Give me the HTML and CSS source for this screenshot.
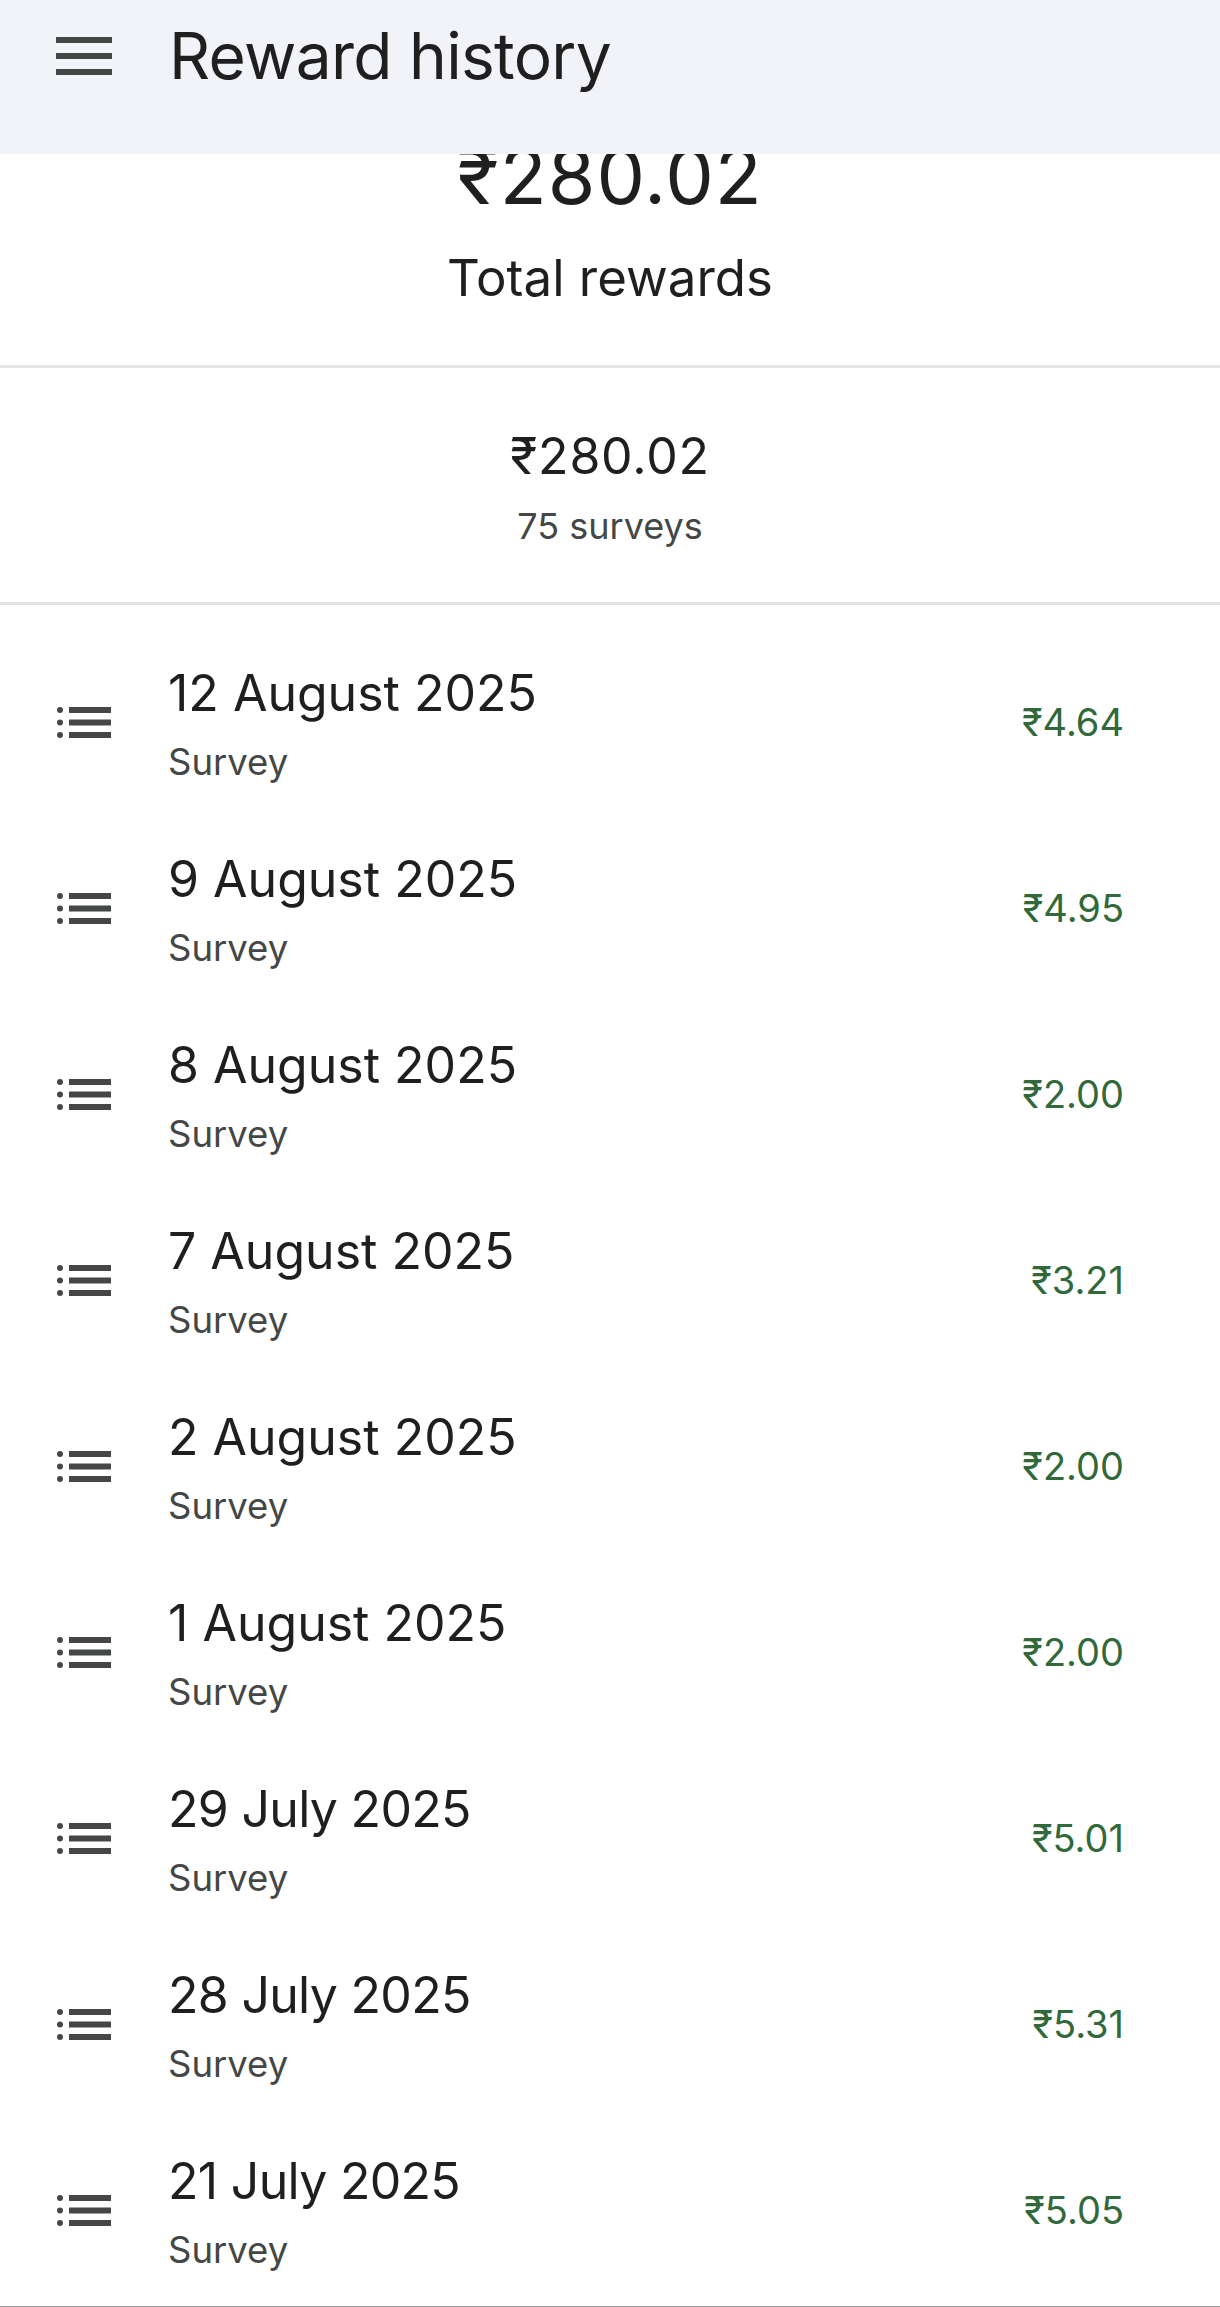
FILE: index.html
```html
<!DOCTYPE html>
<html lang="en">
<head>
<meta charset="utf-8">
<title>Reward history</title>
<link rel="stylesheet" href="styles.css">
</head>
<body>
<header class="bar">
  <svg class="menu" viewBox="0 0 56 38"><rect y="0" width="56" height="6"/><rect y="16" width="56" height="6"/><rect y="32" width="56" height="6"/></svg>
  <h1 class="bar-title">Reward history</h1>
</header>
<section class="hero">
  <div class="hero-num">₹280.02</div>
  <div class="hero-label">Total rewards</div>
</section>
<section class="summary">
  <div class="sum-num">₹280.02</div>
  <div class="sum-label">75 surveys</div>
</section>
<ul class="list">
  <li class="row"><svg class="li-icon" viewBox="0 0 54 31"><circle cx="3" cy="3" r="3"/><circle cx="3" cy="15.5" r="3"/><circle cx="3" cy="28" r="3"/><rect x="12" y="0" width="42" height="6"/><rect x="12" y="12.5" width="42" height="6"/><rect x="12" y="25" width="42" height="6"/></svg><div class="txt"><div class="date">12 August 2025</div><div class="type">Survey</div></div><div class="amt">₹4.64</div></li>
  <li class="row"><svg class="li-icon" viewBox="0 0 54 31"><circle cx="3" cy="3" r="3"/><circle cx="3" cy="15.5" r="3"/><circle cx="3" cy="28" r="3"/><rect x="12" y="0" width="42" height="6"/><rect x="12" y="12.5" width="42" height="6"/><rect x="12" y="25" width="42" height="6"/></svg><div class="txt"><div class="date">9 August 2025</div><div class="type">Survey</div></div><div class="amt">₹4.95</div></li>
  <li class="row"><svg class="li-icon" viewBox="0 0 54 31"><circle cx="3" cy="3" r="3"/><circle cx="3" cy="15.5" r="3"/><circle cx="3" cy="28" r="3"/><rect x="12" y="0" width="42" height="6"/><rect x="12" y="12.5" width="42" height="6"/><rect x="12" y="25" width="42" height="6"/></svg><div class="txt"><div class="date">8 August 2025</div><div class="type">Survey</div></div><div class="amt">₹2.00</div></li>
  <li class="row"><svg class="li-icon" viewBox="0 0 54 31"><circle cx="3" cy="3" r="3"/><circle cx="3" cy="15.5" r="3"/><circle cx="3" cy="28" r="3"/><rect x="12" y="0" width="42" height="6"/><rect x="12" y="12.5" width="42" height="6"/><rect x="12" y="25" width="42" height="6"/></svg><div class="txt"><div class="date">7 August 2025</div><div class="type">Survey</div></div><div class="amt">₹3.21</div></li>
  <li class="row"><svg class="li-icon" viewBox="0 0 54 31"><circle cx="3" cy="3" r="3"/><circle cx="3" cy="15.5" r="3"/><circle cx="3" cy="28" r="3"/><rect x="12" y="0" width="42" height="6"/><rect x="12" y="12.5" width="42" height="6"/><rect x="12" y="25" width="42" height="6"/></svg><div class="txt"><div class="date">2 August 2025</div><div class="type">Survey</div></div><div class="amt">₹2.00</div></li>
  <li class="row"><svg class="li-icon" viewBox="0 0 54 31"><circle cx="3" cy="3" r="3"/><circle cx="3" cy="15.5" r="3"/><circle cx="3" cy="28" r="3"/><rect x="12" y="0" width="42" height="6"/><rect x="12" y="12.5" width="42" height="6"/><rect x="12" y="25" width="42" height="6"/></svg><div class="txt"><div class="date">1 August 2025</div><div class="type">Survey</div></div><div class="amt">₹2.00</div></li>
  <li class="row"><svg class="li-icon" viewBox="0 0 54 31"><circle cx="3" cy="3" r="3"/><circle cx="3" cy="15.5" r="3"/><circle cx="3" cy="28" r="3"/><rect x="12" y="0" width="42" height="6"/><rect x="12" y="12.5" width="42" height="6"/><rect x="12" y="25" width="42" height="6"/></svg><div class="txt"><div class="date july">29 July 2025</div><div class="type">Survey</div></div><div class="amt">₹5.01</div></li>
  <li class="row"><svg class="li-icon" viewBox="0 0 54 31"><circle cx="3" cy="3" r="3"/><circle cx="3" cy="15.5" r="3"/><circle cx="3" cy="28" r="3"/><rect x="12" y="0" width="42" height="6"/><rect x="12" y="12.5" width="42" height="6"/><rect x="12" y="25" width="42" height="6"/></svg><div class="txt"><div class="date july">28 July 2025</div><div class="type">Survey</div></div><div class="amt">₹5.31</div></li>
  <li class="row"><svg class="li-icon" viewBox="0 0 54 31"><circle cx="3" cy="3" r="3"/><circle cx="3" cy="15.5" r="3"/><circle cx="3" cy="28" r="3"/><rect x="12" y="0" width="42" height="6"/><rect x="12" y="12.5" width="42" height="6"/><rect x="12" y="25" width="42" height="6"/></svg><div class="txt"><div class="date july">21 July 2025</div><div class="type">Survey</div></div><div class="amt">₹5.05</div></li>
</ul>
<div class="edge"></div>
</body>
</html>
```
FILE: styles.css
```css
* { box-sizing: border-box; }
html, body { margin: 0; padding: 0; background: #fff; }
body { width: 1220px; height: 2307px; overflow: hidden; font-family: Inter, sans-serif; color: #1f1f1f; }
.bar { height: 154px; background: #f1f3f8; display: flex; align-items: flex-start; padding-left: 56px; }
.menu { width: 56px; height: 38px; margin-top: 37px; fill: #444746; flex: none; }
.bar-title { margin: 18px 0 0 57px; font-size: 64px; line-height: 76px; font-weight: 400; letter-spacing: -0.7px; }
.hero { height: 214px; overflow: hidden; text-align: center; border-bottom: 3px solid #e3e3e3; }
.hero-num { font-size: 77px; line-height: 96px; margin-top: -26px; letter-spacing: 1px; }
.hero-label { font-size: 51px; line-height: 62px; margin-top: 23px; }
.summary { height: 237px; text-align: center; border-bottom: 3px solid #e3e3e3; padding-top: 58px; }
.sum-num { font-size: 50px; line-height: 60px; letter-spacing: 0.8px; }
.sum-label { font-size: 36px; line-height: 48px; margin-top: 16px; color: #444746; }
.list { list-style: none; margin: 24px 0 0; padding: 0; }
.row { height: 186px; display: flex; align-items: center; padding: 0 96px 0 57px; }
.li-icon { width: 54px; height: 31px; fill: #444746; flex: none; }
.txt { flex: 1; margin-left: 57px; padding-top: 4px; }
.date { font-size: 50px; line-height: 62px; }
.july { letter-spacing: -0.7px; }
.type { font-size: 36.5px; line-height: 48px; margin-top: 14px; color: #444746; }
.amt { font-size: 38px; line-height: 48px; color: #31693a; }
.edge { height: 1px; background: #999; margin-top: 3px; }
```
